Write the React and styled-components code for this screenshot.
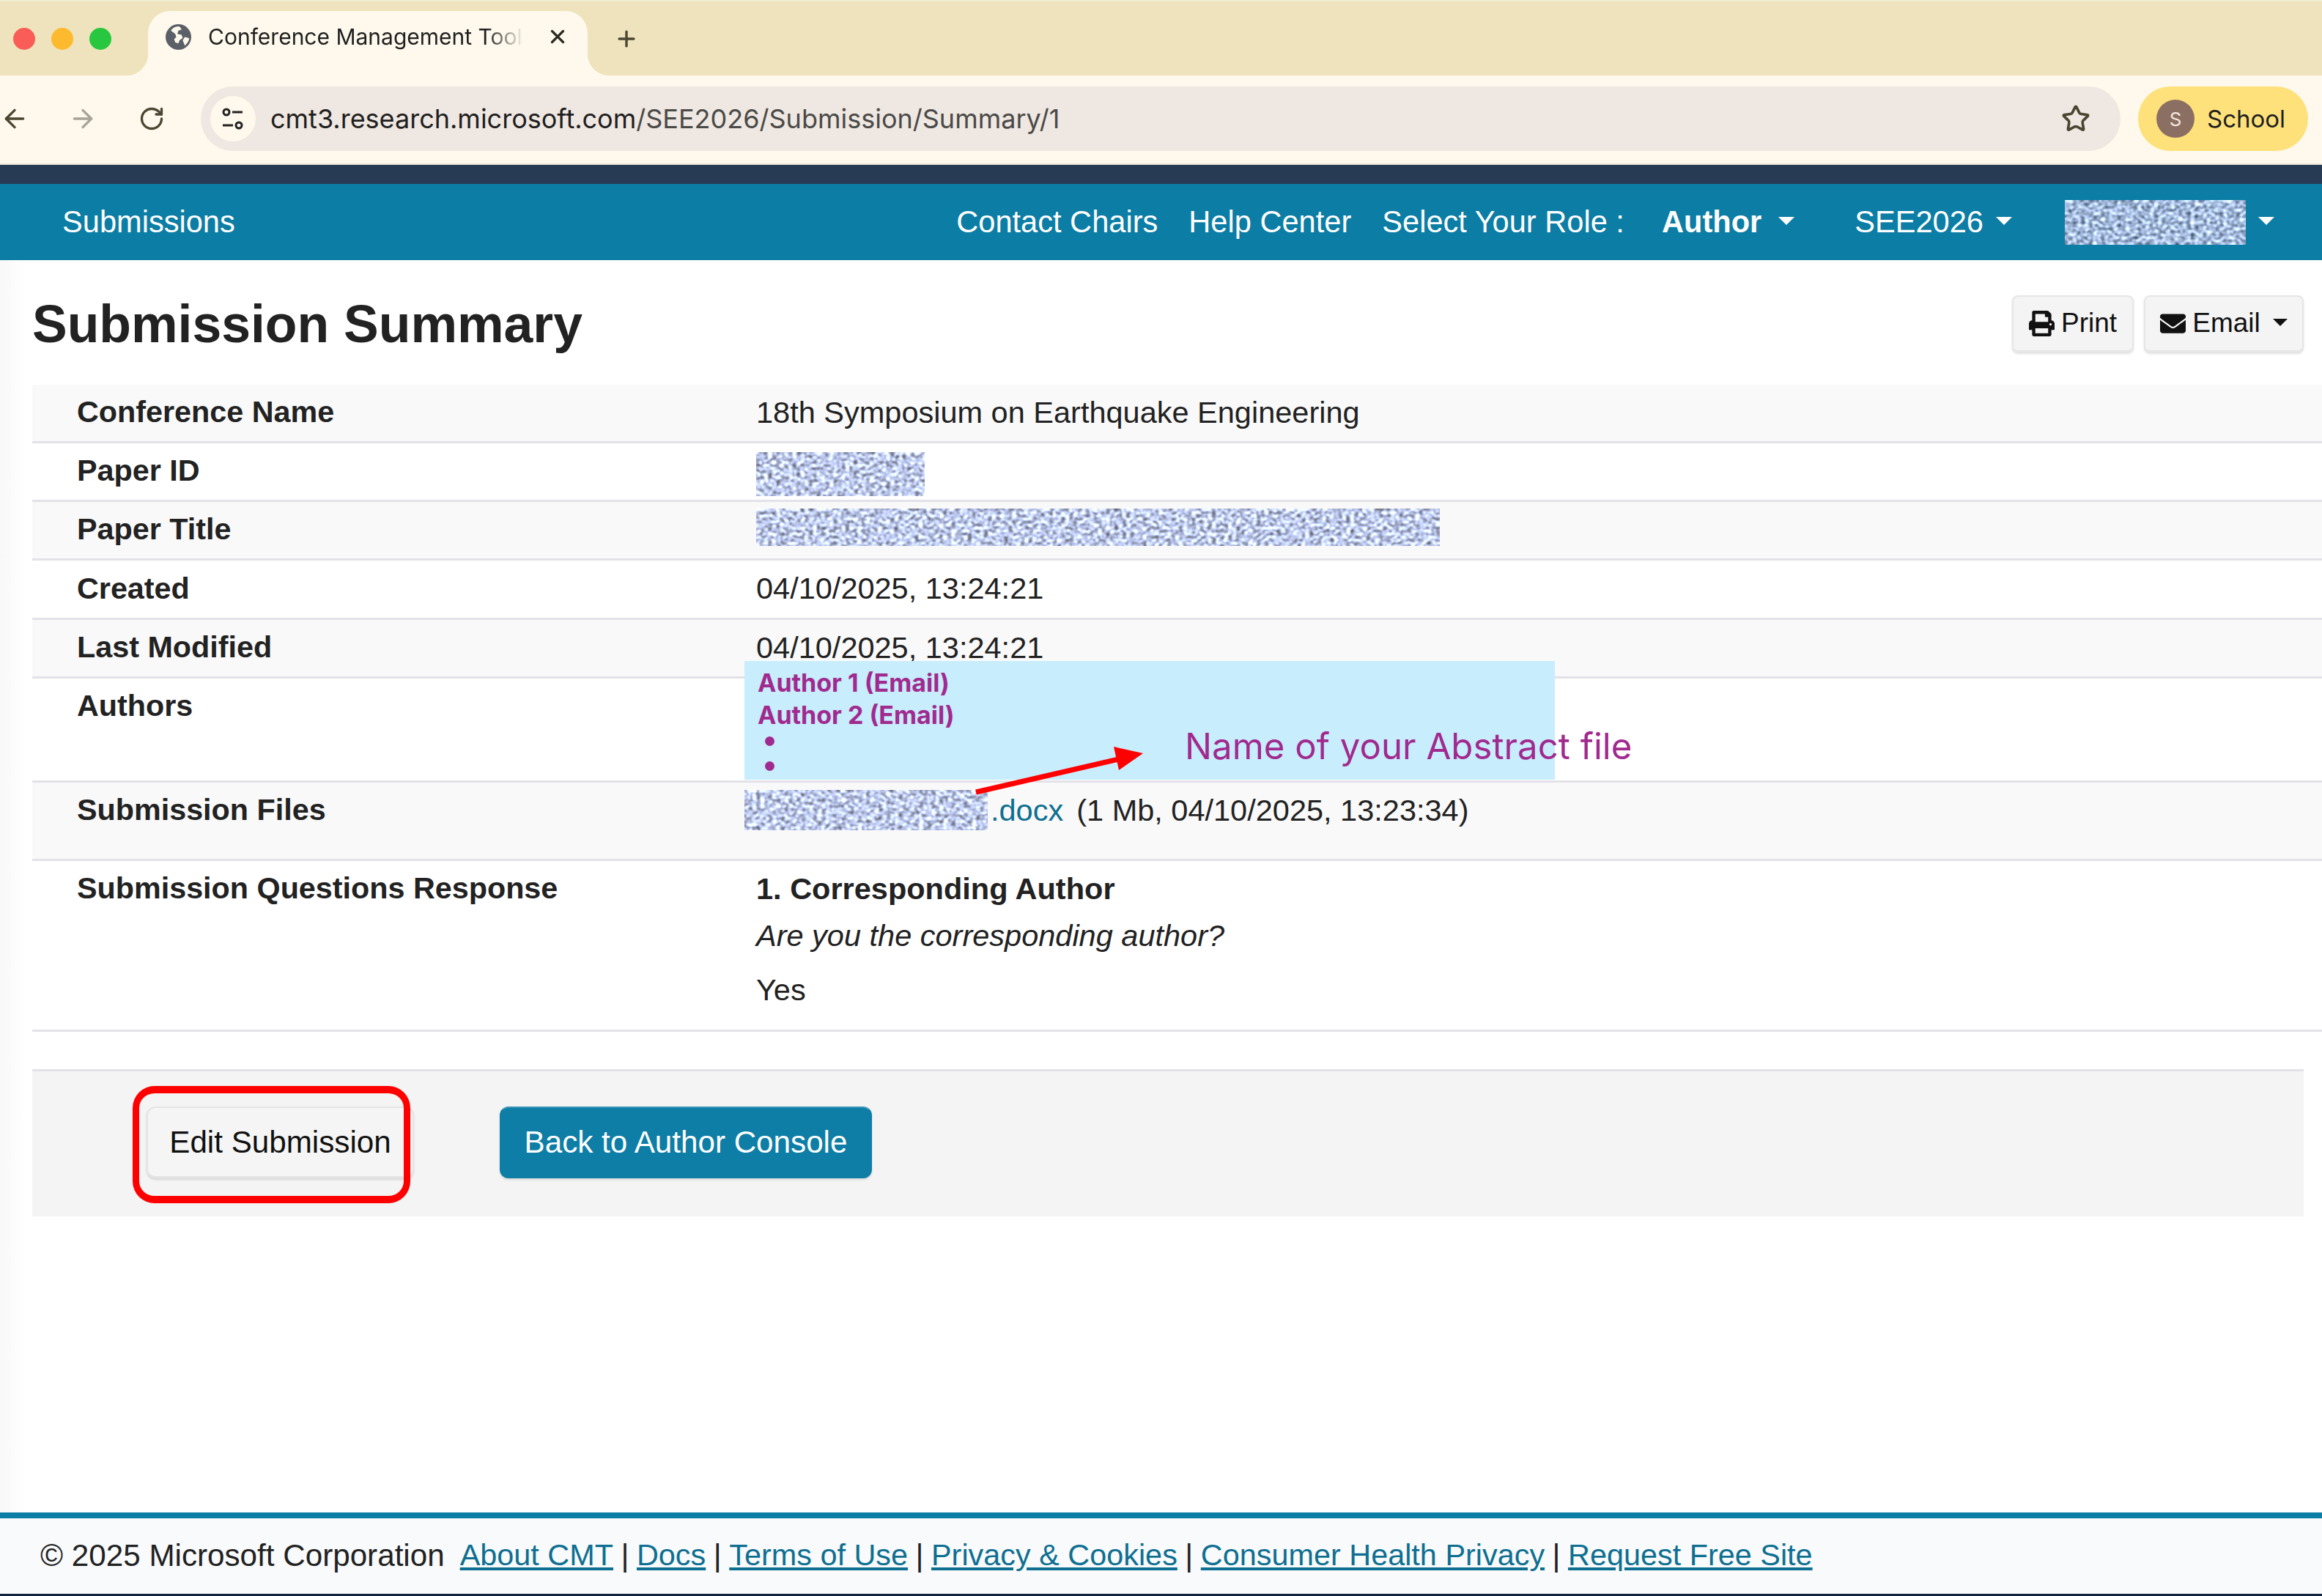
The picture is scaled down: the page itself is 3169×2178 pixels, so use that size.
import React, {useId} from 'react';
import styled, {createGlobalStyle} from 'styled-components';
import {ArrowLeft, ArrowRight, Plus, RotateCw, Star, X} from 'lucide-react';
import {FaEnvelope, FaPrint} from 'react-icons/fa';

const TEAL = '#0c7da5';
const LINK = '#0e6f91';
const PURPLE = '#a12a8f';
const BORDER = '#e2e2e8';

const GlobalStyle = createGlobalStyle`
  html, body {
    margin: 0;
    padding: 0;
    background: #fff;
  }
  body {
    font-family: "Liberation Sans", Arial, sans-serif;
    color: #222;
  }
  * {
    box-sizing: border-box;
  }
`;

const Page = styled.div`
  width: 3169px;
  height: 2178px;
  display: flex;
  flex-direction: column;
  overflow: hidden;
`;

const TabStrip = styled.div`
  height: 103px;
  flex: none;
  background: #eee3bc;
  display: flex;
  align-items: flex-end;
  border-top: 2px solid #f3ecd4;
`;

const Lights = styled.div`
  width: 202px;
  height: 101px;
  padding: 36px 0 0 18px;
  display: flex;
  gap: 22px;
  align-items: flex-start;
`;

const Light = styled.span`
  width: 30px;
  height: 30px;
  border-radius: 50%;
  background: ${p => p.$color};
`;

const Tab = styled.div`
  position: relative;
  width: 600px;
  height: 88px;
  background: #fef9ec;
  border-radius: 30px 30px 0 0;
  display: flex;
  align-items: center;
  padding: 0 0 18px 24px;

  &::before, &::after {
    content: "";
    position: absolute;
    bottom: 0;
    width: 30px;
    height: 30px;
  }
  &::before {
    left: -30px;
    background: radial-gradient(circle at 0 0, transparent 30px, #fef9ec 30.5px);
  }
  &::after {
    right: -30px;
    background: radial-gradient(circle at 100% 0, transparent 30px, #fef9ec 30.5px);
  }
`;

const TabTitle = styled.span`
  width: 431px;
  margin-left: 23px;
  font-family: Inter, sans-serif;
  font-size: 30px;
  color: #1f1f1f;
  white-space: nowrap;
  overflow: hidden;
  -webkit-mask-image: linear-gradient(to right, #000 88%, transparent 100%);
  mask-image: linear-gradient(to right, #000 88%, transparent 100%);
`;

const TabClose = styled(X)`
  margin-left: 31px;
  color: #2b2a20;
`;

const NewTab = styled(Plus)`
  margin-left: 36px;
  color: #4a4631;
  align-self: center;
`;

const Toolbar = styled.div`
  height: 122px;
  flex: none;
  background: #fef9ec;
  border-bottom: 2px solid #ece6d8;
  display: flex;
  align-items: center;
  padding: 0 19px 2px 0;
`;

const NavIcon = styled.span`
  width: 40px;
  margin-left: ${p => p.$gap || 0}px;
  display: flex;
  justify-content: center;
  color: ${p => p.$color || '#4a4631'};
`;

const AddressBar = styled.div`
  flex: 1;
  height: 88px;
  margin-left: 47px;
  background: #efe7e1;
  border-radius: 44px;
  display: flex;
  align-items: center;
  padding: 0 41px 0 13px;
`;

const SiteButton = styled.span`
  width: 62px;
  height: 62px;
  border-radius: 50%;
  background: #fef9ec;
  display: flex;
  align-items: center;
  justify-content: center;
`;

const Url = styled.span`
  flex: 1;
  margin-left: 20px;
  font-family: Inter, sans-serif;
  font-size: 36px;
  color: #4a4a48;
  b {
    font-weight: 400;
    color: #1f1f1f;
  }
`;

const ProfilePill = styled.div`
  width: 232px;
  height: 88px;
  margin-left: 24px;
  background: #fee17a;
  border-radius: 44px;
  display: flex;
  align-items: center;
  padding-left: 25px;
  gap: 17px;
  font-family: Inter, sans-serif;
  font-size: 33px;
  color: #1f1f1f;
`;

const Avatar = styled.span`
  width: 52px;
  height: 52px;
  border-radius: 50%;
  background: #8b6f63;
  color: #f3e6de;
  font-size: 26px;
  display: flex;
  align-items: center;
  justify-content: center;
`;

const TopBand = styled.div`
  height: 26px;
  flex: none;
  background: #273c54;
`;

const NavBar = styled.nav`
  height: 104px;
  flex: none;
  background: ${TEAL};
  display: flex;
  align-items: center;
  padding: 0 65px 0 85px;
  color: #fff;
  font-size: 41.6px;
`;

const NavLinks = styled.div`
  margin-left: auto;
  display: flex;
  align-items: center;
  gap: 42px;
`;

const NavItem = styled.span`
  display: inline-flex;
  align-items: center;
  margin-left: ${p => p.$offset || 0}px;
  font-weight: ${p => (p.$bold ? 700 : 400)};
`;

const Caret = styled.span`
  display: inline-block;
  width: 0;
  height: 0;
  margin-left: ${p => p.$gap || 23}px;
  margin-top: -3px;
  border-left: ${p => p.$size || 11}px solid transparent;
  border-right: ${p => p.$size || 11}px solid transparent;
  border-top: ${p => p.$size || 11}px solid currentColor;
`;

const Content = styled.main`
  flex: 1;
  padding-left: 44px;
  background: linear-gradient(to right, #f8f8f8 0, #fff 34px);
`;

const TitleRow = styled.header`
  height: 170px;
  display: flex;
  align-items: center;
  justify-content: space-between;
  padding: 3px 25px 0 0;
`;

const Heading = styled.h1`
  margin: 0;
  font-size: 71.5px;
  font-weight: 700;
  color: #222;
`;

const ToolButtons = styled.div`
  display: flex;
  gap: 14px;
`;

const ToolButton = styled.button`
  height: 78px;
  width: ${p => p.$width}px;
  display: flex;
  align-items: center;
  justify-content: center;
  gap: 9px;
  background: #f4f4f4;
  border: 2px solid #e6e6e6;
  border-bottom-width: 3px;
  border-radius: 8px;
  box-shadow: 0 2px 3px rgba(0, 0, 0, .12);
  color: #111;
  font-family: inherit;
  font-size: 37px;
  svg {
    font-size: 35px;
  }
`;

const Row = styled.div`
  display: grid;
  grid-template-columns: 988px 1fr;
  height: ${p => p.$height}px;
  background: ${p => (p.$striped ? '#f9f9f9' : '#fff')};
  border-bottom: 3px solid ${BORDER};
  font-size: 41.5px;
  align-items: ${p => (p.$top ? 'start' : 'center')};
  padding: ${p => (p.$top ? '14px 0 0' : '0 0 2px')};
`;

const Label = styled.div`
  padding-left: 61px;
  font-size: 41.3px;
  font-weight: 700;
  color: #222;
`;

const Value = styled.div`
  position: relative;
  display: flex;
  align-items: center;
  margin: ${p => p.$nudge || 0}px 0 ${p => -(p.$nudge || 0)}px;
`;

const FileValue = styled(Value)`
  margin-left: -16px;
  margin-top: -4px;
`;

const FileLink = styled.a`
  color: ${LINK};
  margin-left: 4px;
`;

const FileMeta = styled.span`
  margin-left: 18px;
`;

const AnnotationBox = styled.div`
  position: absolute;
  z-index: 1;
  top: -38px;
  left: -16px;
  width: 1106px;
  height: 162px;
  padding: 8px 0 0 18px;
  background: #c8edfd;
  color: ${PURPLE};
  font-family: Inter, sans-serif;
`;

const AuthorLine = styled.div`
  font-size: 34px;
  font-weight: 700;
  line-height: 44px;
`;

const BulletDot = styled.div`
  width: 13px;
  height: 13px;
  margin: 7px 0 0 10px;
  border-radius: 50%;
  background: ${PURPLE};

  & + & {
    margin-top: 21px;
  }
`;

const AnnotationLabel = styled.span`
  position: absolute;
  left: 601px;
  top: 86px;
  font-size: 49.2px;
  white-space: nowrap;
`;

const AnnotationArrow = styled.svg`
  position: absolute;
  left: 310px;
  top: 115px;
`;

const QuestionTitle = styled.div`
  font-weight: 700;
`;

const QuestionText = styled.div`
  font-style: italic;
  margin-top: 16px;
`;

const QuestionAnswer = styled.div`
  margin-top: 26px;
`;

const Stack = styled.div`
  display: flex;
  flex-direction: column;
`;

const ActionBar = styled.div`
  margin: 51px 25px 0 0;
  height: 201px;
  background: #f4f4f4;
  border-top: 3px solid ${BORDER};
  display: flex;
  align-items: center;
  padding: 0 0 4px 156px;
  gap: 117px;
`;

const ActionButton = styled.button`
  position: relative;
  height: 98px;
  width: ${p => p.$width}px;
  border-radius: 12px;
  font-family: inherit;
  font-size: 42.2px;
  color: ${p => (p.$primary ? '#fff' : '#111')};
  background: ${p => (p.$primary ? '#0e7ea6' : '#f5f5f5')};
  border: 2px solid ${p => (p.$primary ? '#0e7ea6' : '#e4e4e4')};
  border-top-color: ${p => (p.$primary ? '#3a94b6' : '#e4e4e4')};
  border-bottom-width: 3px;
  box-shadow: 0 2px 3px rgba(0, 0, 0, .12);
`;

const Highlight = styled.span`
  position: absolute;
  top: -30px;
  left: -21px;
  width: 379px;
  height: 160px;
  border: 9px solid #f00;
  border-top-width: 10px;
  border-bottom-width: 10px;
  border-radius: 30px;
`;

const Footer = styled.footer`
  height: 114px;
  flex: none;
  background: #f9fafc;
  border-top: 8px solid ${TEAL};
  border-bottom: 3px solid #10233f;
  display: flex;
  align-items: center;
  padding: 0 0 2px 55px;
  font-size: 42.2px;
  color: #222;
`;

const FooterLink = styled.a`
  color: ${LINK};
  font-size: 41.4px;
  text-decoration: underline;
  margin-left: ${p => p.$first ? 21 : 0}px;
`;

const Pipe = styled.span`
  margin: 0 10.5px;
`;

const Redacted = ({width, height, seed = 3, dim}) => {
  const id = 'noise' + useId().replace(/[^a-zA-Z0-9]/g, '');
  return <svg width={width} height={height} style={{display: 'block', flex: 'none'}}>
    <filter id={id} x="0" y="0" width="100%" height="100%" colorInterpolationFilters="sRGB">
      <feTurbulence type="fractalNoise" baseFrequency="0.18 0.24" numOctaves="2" seed={seed}/>
      <feGaussianBlur stdDeviation="0.8"/>
      <feColorMatrix type="matrix" values={dim
        ? '1.5 0 0 0 -0.1  1.55 0 0 0 -0.04  1.7 0 0 0 0.02  0 0 0 0 1'
        : '1.5 0 0 0 0  1.65 0 0 0 -0.03  2.1 0 0 0 -0.1  0 0 0 0 1'}/>
    </filter>
    <rect width={width} height={height} filter={`url(#${id})`}/>
  </svg>;
};

const Favicon = () => <svg width="35" height="35" viewBox="0 0 24 24">
  <circle cx="12" cy="12" r="12" fill="#5b6068"/>
  <path d="M12 2c-3 0-6 2-7 4l4 3 1 3-2 2 1 3 3 1 1-3 3-2-1-3-4-1 1-3 3-1c-1-2-2-3-3-3z" fill="#fef9ec"/>
  <path d="M22 13l-4-1-2 3 2 5c2-2 4-4 4-7z" fill="#fef9ec"/>
</svg>;

const SiteIcon = () => <svg width="30" height="36" viewBox="0 0 30 36" fill="none" stroke="#222" strokeWidth="3">
  <circle cx="6" cy="9" r="4"/>
  <path d="M14 9h14M1 27h14"/>
  <circle cx="23" cy="27" r="4"/>
</svg>;

const App = () => {
  return <Page>
    <GlobalStyle/>
    <TabStrip>
      <Lights>
        <Light $color="#fa5c57"/>
        <Light $color="#fdba2e"/>
        <Light $color="#27c83f"/>
      </Lights>
      <Tab>
        <Favicon/>
        <TabTitle>Conference Management Tool</TabTitle>
        <TabClose size={30} strokeWidth={2.6}/>
      </Tab>
      <NewTab size={34} strokeWidth={2.4}/>
    </TabStrip>
    <Toolbar>
      <NavIcon><ArrowLeft size={40} strokeWidth={2}/></NavIcon>
      <NavIcon $gap={53} $color="#a7a597"><ArrowRight size={40} strokeWidth={2}/></NavIcon>
      <NavIcon $gap={54}><RotateCw size={36} strokeWidth={2.2}/></NavIcon>
      <AddressBar>
        <SiteButton><SiteIcon/></SiteButton>
        <Url><b>cmt3.research.microsoft.com</b>/SEE2026/Submission/Summary/1</Url>
        <Star size={40} strokeWidth={2.2} color="#4a4631"/>
      </AddressBar>
      <ProfilePill>
        <Avatar>S</Avatar>
        School
      </ProfilePill>
    </Toolbar>
    <TopBand/>
    <NavBar>
      <span>Submissions</span>
      <NavLinks>
        <NavItem>Contact Chairs</NavItem>
        <NavItem>Help Center</NavItem>
        <NavItem>Select Your Role :</NavItem>
        <NavItem $bold $offset={9}>Author<Caret/></NavItem>
        <NavItem $offset={40}>SEE2026<Caret $gap={17}/></NavItem>
        <NavItem $offset={30}><Redacted width={247} height={61} seed={8} dim/><Caret $gap={17}/></NavItem>
      </NavLinks>
    </NavBar>
    <Content>
      <TitleRow>
        <Heading>Submission Summary</Heading>
        <ToolButtons>
          <ToolButton $width={166}><FaPrint/>Print</ToolButton>
          <ToolButton $width={218}><FaEnvelope/>Email<Caret $size={10} $gap={8}/></ToolButton>
        </ToolButtons>
      </TitleRow>
      <Row $striped $height={80}>
        <Label>Conference Name</Label>
        <Value>18th Symposium on Earthquake Engineering</Value>
      </Row>
      <Row $height={80}>
        <Label>Paper ID</Label>
        <Value $nudge={4}><Redacted width={230} height={60} seed={4}/></Value>
      </Row>
      <Row $striped $height={80}>
        <Label>Paper Title</Label>
        <Value $nudge={-3}><Redacted width={933} height={51} seed={5}/></Value>
      </Row>
      <Row $height={81}>
        <Label>Created</Label>
        <Value>04/10/2025, 13:24:21</Value>
      </Row>
      <Row $striped $height={80}>
        <Label>Last Modified</Label>
        <Value>04/10/2025, 13:24:21</Value>
      </Row>
      <Row $top $height={142}>
        <Label>Authors</Label>
        <Value>
          <AnnotationBox>
            <AuthorLine>Author 1 (Email)</AuthorLine>
            <AuthorLine>Author 2 (Email)</AuthorLine>
            <BulletDot/>
            <BulletDot/>
            <AnnotationLabel>Name of your Abstract file</AnnotationLabel>
            <AnnotationArrow width="240" height="70" viewBox="0 0 240 70">
              <path d="M6 64 L205 18" stroke="#f00" strokeWidth="7" fill="none"/>
              <path d="M234 11 L194 2 L201 34 Z" fill="#f00"/>
            </AnnotationArrow>
          </AnnotationBox>
        </Value>
      </Row>
      <Row $striped $top $height={107}>
        <Label>Submission Files</Label>
        <FileValue>
          <Redacted width={332} height={55} seed={6}/>
          <FileLink>.docx</FileLink>
          <FileMeta>(1 Mb, 04/10/2025, 13:23:34)</FileMeta>
        </FileValue>
      </Row>
      <Row $top $height={233}>
        <Label>Submission Questions Response</Label>
        <Stack>
          <QuestionTitle>1. Corresponding Author</QuestionTitle>
          <QuestionText>Are you the corresponding author?</QuestionText>
          <QuestionAnswer>Yes</QuestionAnswer>
        </Stack>
      </Row>
      <ActionBar>
        <ActionButton $width={365}>
          Edit Submission
          <Highlight/>
        </ActionButton>
        <ActionButton $primary $width={508}>Back to Author Console</ActionButton>
      </ActionBar>
    </Content>
    <Footer>
      © 2025 Microsoft Corporation
      <FooterLink $first>About CMT</FooterLink><Pipe>|</Pipe>
      <FooterLink>Docs</FooterLink><Pipe>|</Pipe>
      <FooterLink>Terms of Use</FooterLink><Pipe>|</Pipe>
      <FooterLink>Privacy &amp; Cookies</FooterLink><Pipe>|</Pipe>
      <FooterLink>Consumer Health Privacy</FooterLink><Pipe>|</Pipe>
      <FooterLink>Request Free Site</FooterLink>
    </Footer>
  </Page>;
};

export default App;
